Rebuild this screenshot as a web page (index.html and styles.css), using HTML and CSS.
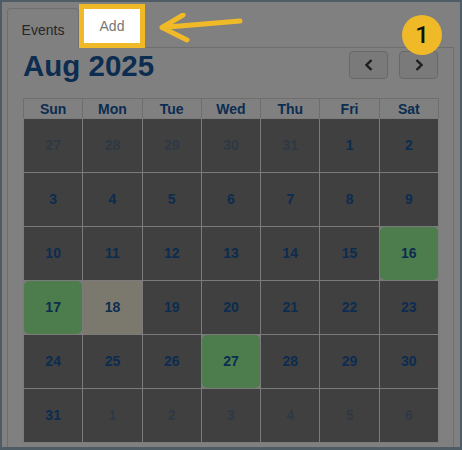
FILE: index.html
```html
<!DOCTYPE html>
<html lang="en">
<head>
  <meta charset="UTF-8">
  <title>Calendar tour</title>
  <link rel="stylesheet" href="styles.css">
</head>
<body>
  <div class="frame">
    <!-- Вкладки -->
    <div class="tabs">
      <div class="tab active">Events</div>
      <div class="tab add">Add</div>
    </div>

    <div class="panel">
      <div class="cal-head">
        <h1 class="month">Aug 2025</h1>
        <div class="nav">
          <button class="nav-btn" aria-label="Previous">
            <svg width="8" height="12" viewBox="0 0 8 12"><polyline points="6.5,1 1.5,6 6.5,11" /></svg>
          </button>
          <button class="nav-btn" aria-label="Next">
            <svg width="8" height="12" viewBox="0 0 8 12"><polyline points="1.5,1 6.5,6 1.5,11" /></svg>
          </button>
        </div>
      </div>

      <div class="week-head">
        <div>Sun</div><div>Mon</div><div>Tue</div><div>Wed</div><div>Thu</div><div>Fri</div><div>Sat</div>
      </div>
      <div class="days">
        <div class="day other">27</div><div class="day other">28</div><div class="day other">29</div><div class="day other">30</div><div class="day other">31</div><div class="day">1</div><div class="day">2</div>
        <div class="day">3</div><div class="day">4</div><div class="day">5</div><div class="day">6</div><div class="day">7</div><div class="day">8</div><div class="day">9</div>
        <div class="day">10</div><div class="day">11</div><div class="day">12</div><div class="day">13</div><div class="day">14</div><div class="day">15</div><div class="day event">16</div>
        <div class="day event">17</div><div class="day today">18</div><div class="day">19</div><div class="day">20</div><div class="day">21</div><div class="day">22</div><div class="day">23</div>
        <div class="day">24</div><div class="day">25</div><div class="day">26</div><div class="day event">27</div><div class="day">28</div><div class="day">29</div><div class="day">30</div>
        <div class="day">31</div><div class="day other">1</div><div class="day other">2</div><div class="day other">3</div><div class="day other">4</div><div class="day other">5</div><div class="day other">6</div>
      </div>
    </div>

    <!-- Подсказка тура -->
    <svg class="arrow" width="100" height="40" viewBox="0 0 100 40">
      <path d="M83 8 L5 14.5 M26 2 L5 14.5 L30 27" />
    </svg>
    <div class="badge">1</div>
  </div>
</body>
</html>
```

FILE: styles.css
```css
body {
  margin: 0;
  font-family: "Liberation Sans", Arial, sans-serif;
}

.frame {
  position: relative;
  width: 462px;
  height: 450px;
  box-sizing: border-box;
  border: 2px solid #4e5c65;
  border-bottom-width: 3px;
  background: #808080;
  overflow: hidden;
}

/* Вкладки */
.tabs {
  display: flex;
  align-items: flex-start;
  padding: 6px 0 0 5px;
}

.tab {
  font-size: 14px;
  box-sizing: border-box;
}

.tab.active {
  height: 40px;
  width: 72px;
  padding-top: 13px;
  text-align: center;
  color: #262626;
  border: 1px solid #6f6f6f;
  border-bottom: none;
  border-radius: 4px 4px 0 0;
  position: relative;
  z-index: 1;
  background: #808080;
}

.tab.add {
  margin: 1px 0 0 5px;
  width: 56px;
  height: 34px;
  line-height: 34px;
  text-align: center;
  color: #777;
  background: #fff;
  outline: 5px solid #f0b928;
  position: relative;
  z-index: 2;
}

/* Панель календаря */
.panel {
  margin: -1px 6px 0 5px;
  border: 1px solid #6f6f6f;
  border-bottom: none;
  padding: 3px 14px 0 15px;
  height: 420px;
}

.cal-head {
  display: flex;
  justify-content: space-between;
  align-items: flex-start;
  height: 28px;
}

.month {
  margin: -2px 0 0;
  font-size: 29.5px;
  line-height: 34px;
  font-weight: bold;
  color: #0c2c50;
}

.nav {
  display: flex;
  gap: 11px;
  margin-right: 1px;
}

.nav-btn {
  width: 39px;
  height: 28px;
  padding: 0;
  display: flex;
  align-items: center;
  justify-content: center;
  background: #7a7a7a;
  border: 1px solid #686868;
  border-radius: 4px;
}

.nav-btn polyline {
  fill: none;
  stroke: #1e1e1e;
  stroke-width: 2.4;
}

/* Сетка дней */
.week-head,
.days {
  display: grid;
  grid-template-columns: repeat(7, 1fr);
  gap: 1px;
  padding: 1px;
  width: 416px;
  box-sizing: border-box;
}

.week-head {
  margin-top: 19px;
  background: #6e6e6e;
  padding-bottom: 0;
}

.week-head div {
  background: #808080;
  height: 19px;
  line-height: 20px;
  text-align: center;
  font-size: 14px;
  font-weight: bold;
  color: #0c2c50;
}

.days {
  background: #7b7b7b;
}

.day {
  height: 53px;
  line-height: 53px;
  text-align: center;
  font-size: 14px;
  font-weight: bold;
  color: #0c2c50;
  background: #404040;
}

.day.other {
  color: #2f3945;
}

.day.event {
  background: #4d7d4c;
  border-radius: 5px;
}

.day.today {
  background: #7b786d;
}

/* Подсказка тура */
.arrow {
  position: absolute;
  left: 155px;
  top: 11px;
}

.arrow path {
  fill: none;
  stroke: #f0b928;
  stroke-width: 5;
  stroke-linecap: round;
  stroke-linejoin: round;
}

.badge {
  position: absolute;
  left: 400px;
  top: 13px;
  width: 40px;
  height: 40px;
  border-radius: 50%;
  background: #f0b928;
  color: #111;
  font-family: Roboto, sans-serif;
  font-weight: 500;
  font-size: 24px;
  line-height: 41px;
  text-align: center;
}
```
